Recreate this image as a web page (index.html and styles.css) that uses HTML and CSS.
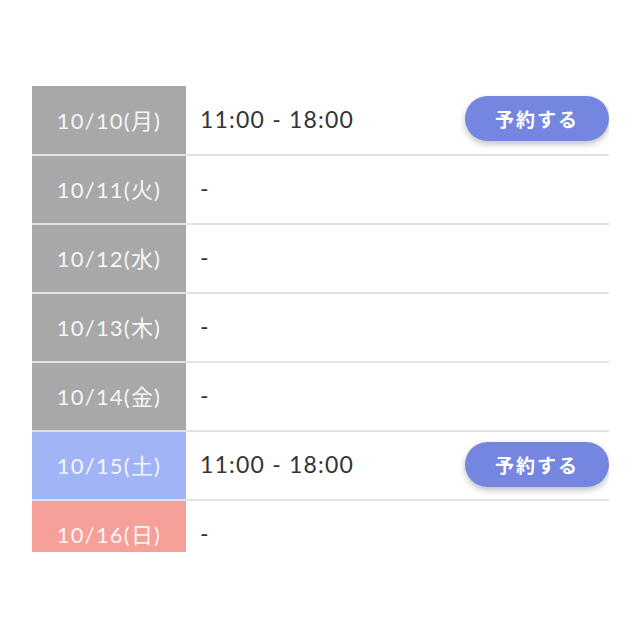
FILE: index.html
```html
<!DOCTYPE html>
<html lang="ja">

<head>
    <meta charset="UTF-8">
    <meta name="viewport" content="width=device-width, initial-scale=1.0">
    <title>予約</title>
    <link rel="stylesheet" href="styles.css">
</head>

<body>
    <div class="schedule">
        <table class="schedule-table">
            <tr>
                <th class="day">10/10(月)</th>
                <td class="time">11:00 - 18:00</td>
                <td class="action"><button class="reserve">予約する</button></td>
            </tr>
            <tr>
                <th class="day">10/11(火)</th>
                <td class="time">-</td>
                <td class="action"></td>
            </tr>
            <tr>
                <th class="day">10/12(水)</th>
                <td class="time">-</td>
                <td class="action"></td>
            </tr>
            <tr>
                <th class="day">10/13(木)</th>
                <td class="time">-</td>
                <td class="action"></td>
            </tr>
            <tr>
                <th class="day">10/14(金)</th>
                <td class="time">-</td>
                <td class="action"></td>
            </tr>
            <tr>
                <th class="day sat">10/15(土)</th>
                <td class="time">11:00 - 18:00</td>
                <td class="action"><button class="reserve">予約する</button></td>
            </tr>
            <tr>
                <th class="day sun">10/16(日)</th>
                <td class="time">-</td>
                <td class="action"></td>
            </tr>
        </table>
    </div>
</body>

</html>
```

FILE: styles.css
```css
* {
    --gray: rgb(168, 168, 168);
    --blue: rgb(160, 180, 246);
    --pink: rgb(245, 160, 152);
    --button: rgb(116, 134, 224);
    --line: rgb(226, 226, 226);
}

body {
    background-color: white;
    margin: 0;
    font-family: Lato, "Noto Sans CJK JP", sans-serif;
}

.schedule {
    margin: 86px 0 0 32px;
    width: 577px;
    height: 466px;
    overflow: hidden;
}

.schedule-table {
    width: 100%;
    border-collapse: collapse;
}

.schedule-table tr {
    height: 69px;
    border-bottom: 2px solid var(--line);
}

.schedule-table th,
.schedule-table td {
    padding: 0 0 3px 0;
}

.day {
    width: 154px;
    background-color: var(--gray);
    color: rgba(255, 255, 255, 0.92);
    font-size: 22px;
    font-weight: 400;
    letter-spacing: 1.2px;
    text-align: center;
}

.day.sat {
    background-color: var(--blue);
}

.day.sun {
    background-color: var(--pink);
}

.schedule-table .time {
    padding-left: 14px;
    color: rgb(51, 51, 51);
    font-size: 23px;
    letter-spacing: 1.2px;
}

.action {
    text-align: right;
}

.reserve {
    width: 144px;
    height: 45px;
    border: none;
    border-radius: 23px;
    background-color: var(--button);
    color: white;
    font-family: "Noto Sans CJK JP", sans-serif;
    font-size: 19px;
    font-weight: 700;
    letter-spacing: 2px;
    box-shadow: 0 3px 6px rgba(0, 0, 0, 0.25);
}
```
